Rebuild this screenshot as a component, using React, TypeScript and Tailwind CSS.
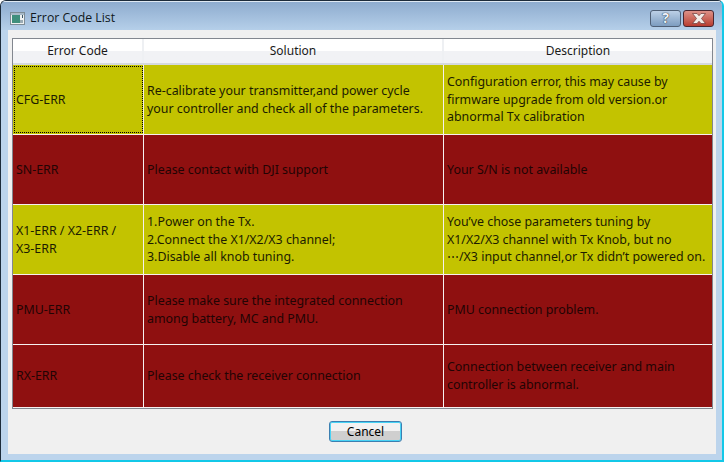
const rows = [
  { c: "y", a: ["CFG-ERR"], b: ["Re-calibrate your transmitter,and power cycle", "your controller and check all of the parameters."], d: ["Configuration error, this may cause by", "firmware upgrade from old version.or", "abnormal Tx calibration"] },
  { c: "r", a: ["SN-ERR"], b: ["Please contact with DJI support"], d: ["Your S/N is not available"] },
  { c: "y", a: ["X1-ERR / X2-ERR /", "X3-ERR"], b: ["1.Power on the Tx.", "2.Connect the X1/X2/X3 channel;", "3.Disable all knob tuning."], d: ["You’ve chose parameters tuning by", "X1/X2/X3 channel with Tx Knob, but no", "⋯/X3 input channel,or Tx didn’t powered on."] },
  { c: "r", a: ["PMU-ERR"], b: ["Please make sure the integrated connection", "among battery, MC and PMU."], d: ["PMU connection problem."] },
  { c: "r", a: ["RX-ERR"], b: ["Please check the receiver connection"], d: ["Connection between receiver and main", "controller is abnormal."] },
];

function Lines({ lines }: { lines: string[] }) {
  return (
    <div className={lines.length === 3 ? "leading-[17.5px]" : "leading-[18px]"}>
      {lines.map((l) => <div key={l} className="whitespace-nowrap">{l}</div>)}
    </div>
  );
}

export default function App() {
  return (
    <div className="w-[724px] h-[462px] overflow-hidden bg-[#bcd4ec] border-l border-t border-[#1c2b3a] border-r-2 border-r-[#13c8e8] border-b-2 border-b-[#13c8e8] rounded-t-md flex flex-col [font-family:'Noto_Sans',sans-serif] text-[12.4px] text-[#1a1a1a]">
      <div className="h-[29px] shrink-0 flex items-center pt-[5px] pl-[9px] pr-[8px] bg-gradient-to-b from-[#8dabce] to-[#b5cfe9] shadow-[inset_0_1px_0_#dfe9f3]">
        <svg width="15" height="13" viewBox="0 0 15 13" className="mr-[5px]">
          <rect x="0.5" y="0.5" width="14" height="12" fill="#eef1f1" stroke="#7d8c96" />
          <rect x="1" y="1" width="13" height="2" fill="#a9bbc8" />
          <rect x="2" y="3" width="8" height="8" fill="#3f8f7c" />
          <rect x="10" y="8" width="3" height="3" fill="#9aabb4" />
          <rect x="12" y="3" width="1" height="3" fill="#3c5666" />
        </svg>
        <span className="text-[#101820] text-[12.3px] [font-family:'Open_Sans',sans-serif]">Error Code List</span>
        <div className="ml-auto flex gap-[2px]">
          <div className="w-[31px] h-[17px] rounded-[3px] border border-[#4f6076] bg-gradient-to-b from-[#bcd0e6] to-[#7d9dc0] flex items-center justify-center text-[#eef3f8] font-bold text-[14px] leading-none [text-shadow:0_0_1px_#1a2838,0_0_1px_#1a2838]">?</div>
          <div className="w-[31px] h-[17px] rounded-[3px] border border-[#4a2730] bg-gradient-to-b from-[#dd9188] to-[#b83c30] flex items-center justify-center">
            <svg width="16" height="11" viewBox="0 0 16 11"><path d="M1.5 .5h4.5l2 2.2 2-2.2h4.5L10.5 5.5l4 5H10L8 8.2 6 10.500H1.500l4-5z" fill="#f2ece8" stroke="#6b3a3a" strokeWidth="0.7" /></svg>
          </div>
        </div>
      </div>
      <div className="ml-[7px] w-[708px] h-[424px] bg-[#f0f0f0] pt-[8px] pl-[4px] flex flex-col">
        <div className="w-[701px] h-[371px] border border-[#82878f] bg-white flex flex-col">
          <div className="h-[26px] shrink-0 grid grid-cols-[131px_300px_1fr] border-b-2 border-[#d5d9de] bg-gradient-to-b from-white from-50% to-[#f1f2f5] to-50% text-[12px]">
            <div className="flex items-center justify-center border-r-2 border-[#eef0f3]">Error Code</div>
            <div className="flex items-center justify-center border-r-2 border-[#eef0f3]">Solution</div>
            <div className="flex items-center justify-center">Description</div>
          </div>
          {rows.map((r, i) => (
            <div key={r.a[0]} className={`${i === 4 ? "flex-1 min-h-0" : "h-[70px] shrink-0"} grid grid-cols-[131px_300px_1fr] border-b border-[#f6f0f0] ${r.c === "y" ? "bg-[#c3c300] text-[#1c1c00]" : "bg-[#8f1010] text-[#220404]"}`}>
              <div className={`flex items-center pl-[3px] border-r border-[#f6f0f0] ${i === 0 ? "outline-1 -outline-offset-2 outline-dotted outline-black" : ""}`}><Lines lines={r.a} /></div>
              <div className="flex items-center pl-[3px] border-r border-[#f6f0f0]"><Lines lines={r.b} /></div>
              <div className="flex items-center pl-[3px]"><Lines lines={r.d} /></div>
            </div>
          ))}
        </div>
        <div className="flex-1 flex items-start pt-[12px] pl-[317px]">
          <button className="w-[73px] h-[21px] rounded-[3px] border border-[#3c7fb1] bg-gradient-to-b from-[#f2f2f2] from-45% to-[#cfcfcf] to-50% shadow-[inset_0_0_0_1px_#48d3f5] text-black text-[12px] leading-none">Cancel</button>
        </div>
      </div>
    </div>
  );
}
